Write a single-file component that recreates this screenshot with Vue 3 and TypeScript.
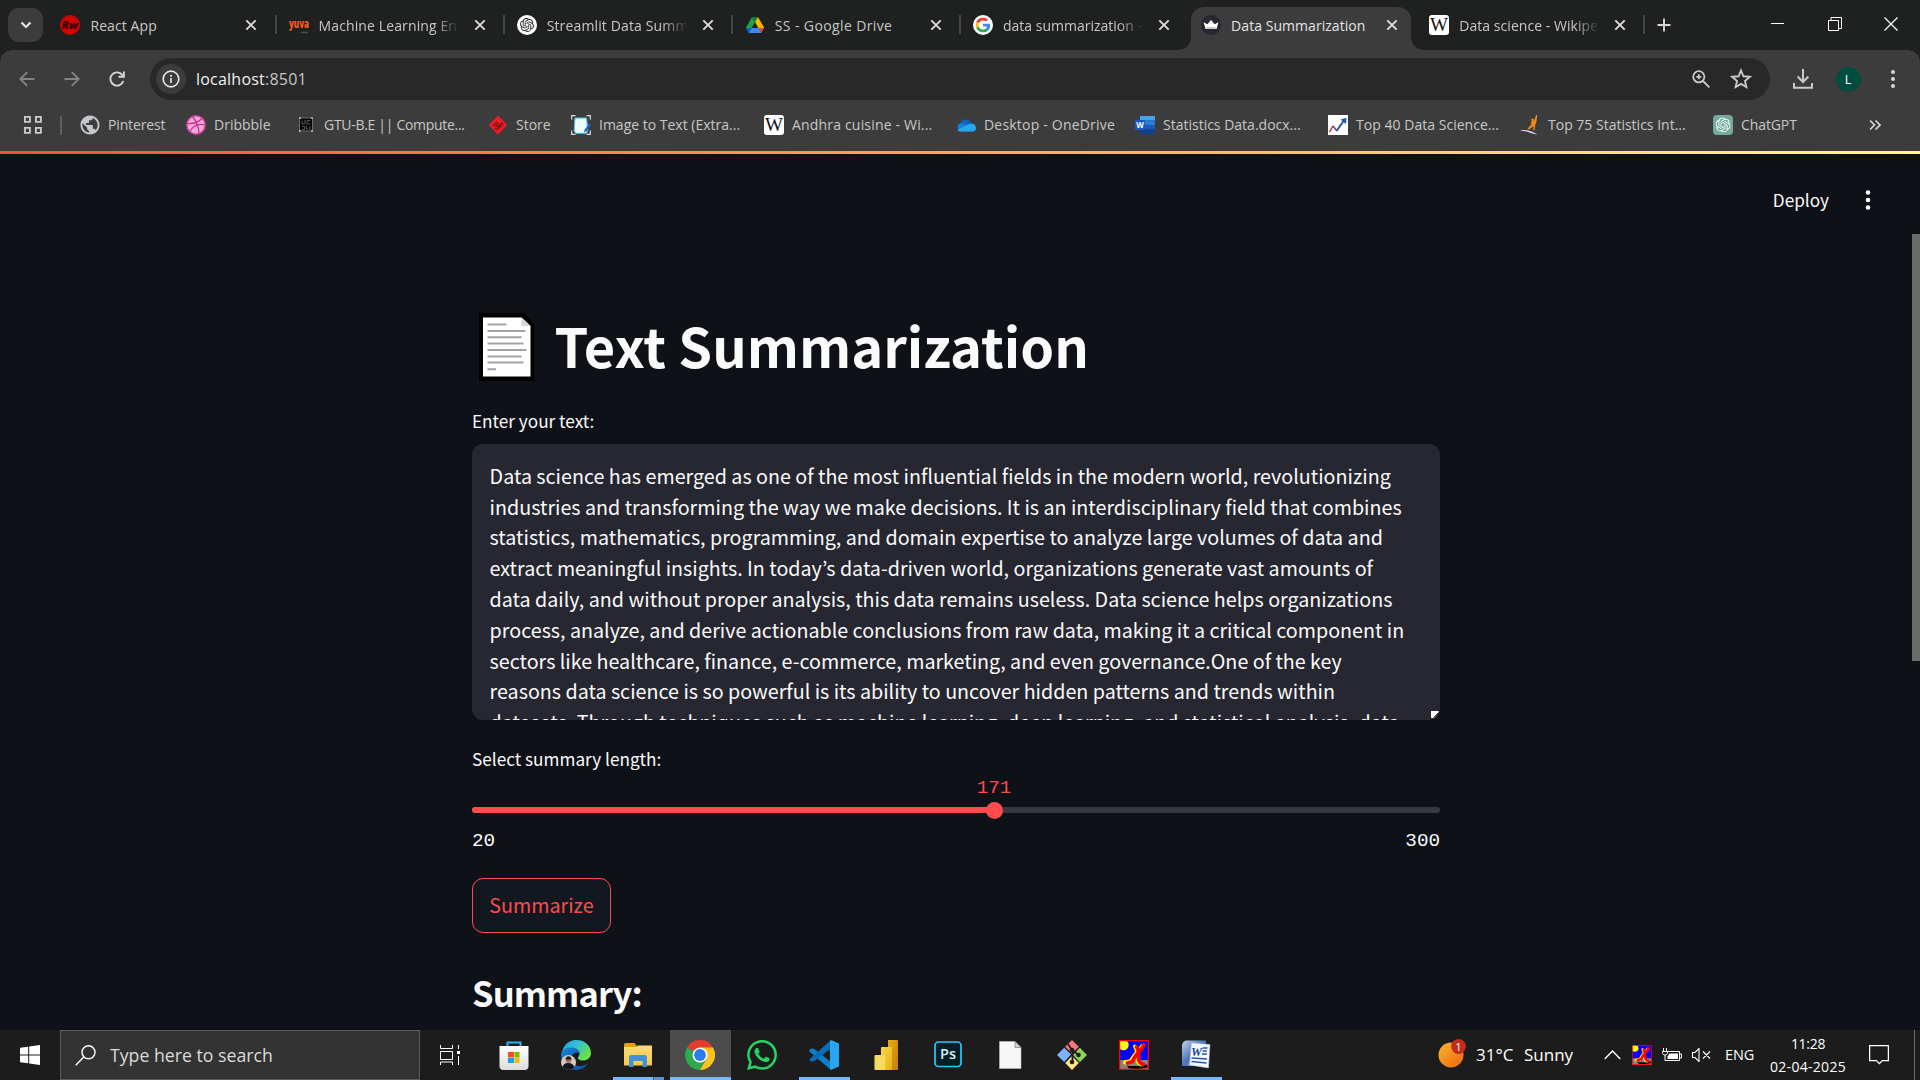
<script setup lang="ts">
interface Tab { icon: string; title: string; tracking: number; active?: boolean; sep?: boolean; fade?: boolean }
interface Bookmark { icon: string; title: string; width: number; tracking: number }
interface TaskApp { icon: string; open?: boolean; focused?: boolean; split?: boolean }
interface Letter { label: string; x: number; y: number; length: number }

const tabs: Tab[] = [
  { icon: 'rw', title: 'React App', tracking: 0.1, sep: true },
  { icon: 'yuva', title: 'Machine Learning En', tracking: 0.12, sep: true, fade: true },
  { icon: 'gpt-white', title: 'Streamlit Data Summ', tracking: 0.14, sep: true, fade: true },
  { icon: 'drive', title: 'SS - Google Drive', tracking: 0.38, sep: true },
  { icon: 'google', title: 'data summarization -', tracking: 0, fade: true },
  { icon: 'crown', title: 'Data Summarization', tracking: 0.05, active: true },
  { icon: 'wiki', title: 'Data science - Wikipe', tracking: 0.05, sep: true, fade: true },
]

const bookmarks: Bookmark[] = [
  { icon: 'globe', title: 'Pinterest', width: 106, tracking: -0.15 },
  { icon: 'dribbble', title: 'Dribbble', width: 110, tracking: 0 },
  { icon: 'gtu', title: 'GTU-B.E || Compute...', width: 192, tracking: -0.3 },
  { icon: 'store', title: 'Store', width: 83, tracking: 0 },
  { icon: 'image', title: 'Image to Text (Extra...', width: 193, tracking: 0 },
  { icon: 'wiki', title: 'Andhra cuisine - Wi...', width: 192, tracking: 0.18 },
  { icon: 'onedrive', title: 'Desktop - OneDrive', width: 179, tracking: 0.2 },
  { icon: 'word', title: 'Statistics Data.docx...', width: 193, tracking: 0 },
  { icon: 'chart', title: 'Top 40 Data Science...', width: 192, tracking: 0.03 },
  { icon: 'figure', title: 'Top 75 Statistics Int...', width: 193, tracking: 0 },
  { icon: 'gpt-green', title: 'ChatGPT', width: 100, tracking: -0.1 },
]

// Icons whose mark is a letter: the letters are set as text over the icon's base shape.
const letters: Record<string, Letter> = {
  rw: { label: 'Rw', x: 1.5, y: 14, length: 16.5 },
  yuva: { label: 'yuva', x: 0, y: 13, length: 20 },
  wiki: { label: 'W', x: 1, y: 15.8, length: 18 },
  word: { label: 'W', x: 1.2, y: 12.9, length: 7.6 },
  photoshop: { label: 'Ps', x: 7, y: 19, length: 16 },
  'word-2007': { label: 'W', x: 10, y: 15.5, length: 11 },
}

const lines: string[] = [
  'Data science has emerged as one of the most influential fields in the modern world, revolutionizing',
  'industries and transforming the way we make decisions. It is an interdisciplinary field that combines',
  'statistics, mathematics, programming, and domain expertise to analyze large volumes of data and',
  'extract meaningful insights. In today’s data-driven world, organizations generate vast amounts of',
  'data daily, and without proper analysis, this data remains useless. Data science helps organizations',
  'process, analyze, and derive actionable conclusions from raw data, making it a critical component in',
  'sectors like healthcare, finance, e-commerce, marketing, and even governance.One of the key',
  'reasons data science is so powerful is its ability to uncover hidden patterns and trends within',
  'datasets. Through techniques such as machine learning, deep learning, and statistical analysis, data',
]

const min = 20
const max = 300
const value = 171
const percent = ((value - min) / (max - min)) * 100

const apps: TaskApp[] = [
  { icon: 'ms-store' },
  { icon: 'edge' },
  { icon: 'explorer', open: true, split: true },
  { icon: 'chrome', open: true, focused: true },
  { icon: 'whatsapp' },
  { icon: 'vscode', open: true },
  { icon: 'powerbi' },
  { icon: 'photoshop' },
  { icon: 'file' },
  { icon: 'git' },
  { icon: 'xming' },
  { icon: 'word-2007', open: true },
]
</script>

<template>
  <div class="screen">
    <svg class="sprite" aria-hidden="true">
      <defs>
        <linearGradient id="g-edge" x1="0" y1="0" x2="1" y2="0.6"><stop offset="0" stop-color="#1b9de2" /><stop offset=".5" stop-color="#35c1d0" /><stop offset="1" stop-color="#6be33f" /></linearGradient>
        <linearGradient id="g-edge2" x1="0" y1="0" x2="1" y2="1"><stop offset="0" stop-color="#1583d8" /><stop offset="1" stop-color="#0f4f9e" /></linearGradient>
        <linearGradient id="g-folder" x1="0" y1="0" x2="0" y2="1"><stop offset="0" stop-color="#ffdb74" /><stop offset="1" stop-color="#fbc748" /></linearGradient>
        <linearGradient id="g-bag" x1="0" y1="0" x2="0" y2="1"><stop offset="0" stop-color="#fff" /><stop offset="1" stop-color="#dcdcdc" /></linearGradient>
        <linearGradient id="g-sun" x1="0" y1="0" x2="1" y2="1"><stop offset="0" stop-color="#f5b82e" /><stop offset="1" stop-color="#f2640f" /></linearGradient>
        <linearGradient id="g-pb" x1="0" y1="0" x2="1" y2="1"><stop offset="0" stop-color="#e8ad0f" /><stop offset="1" stop-color="#c87a0e" /></linearGradient>
        <linearGradient id="g-pb2" x1="0" y1="0" x2="1" y2="1"><stop offset="0" stop-color="#f8d84e" /><stop offset="1" stop-color="#e8b010" /></linearGradient>
        <linearGradient id="g-word" x1="0" y1="0" x2="1" y2="1"><stop offset="0" stop-color="#c5d5ee" /><stop offset=".5" stop-color="#4a72b8" /><stop offset="1" stop-color="#a9c0e4" /></linearGradient>
      </defs>
      <symbol id="knot" viewBox="0 0 24 24"><path d="M22.2819 9.8211a5.9847 5.9847 0 0 0-.5157-4.9108 6.0462 6.0462 0 0 0-6.5098-2.9A6.0651 6.0651 0 0 0 4.9807 4.1818a5.9847 5.9847 0 0 0-3.9977 2.9 6.0462 6.0462 0 0 0 .7427 7.0966 5.98 5.98 0 0 0 .511 4.9107 6.051 6.051 0 0 0 6.5146 2.9001A5.9847 5.9847 0 0 0 13.2599 24a6.0557 6.0557 0 0 0 5.7718-4.2058 5.9894 5.9894 0 0 0 3.9977-2.9001 6.0557 6.0557 0 0 0-.7475-7.0729zm-9.022 12.6081a4.4755 4.4755 0 0 1-2.8764-1.0408l.1419-.0804 4.7783-2.7582a.7948.7948 0 0 0 .3927-.6813v-6.7369l2.02 1.1686a.071.071 0 0 1 .038.052v5.5826a4.504 4.504 0 0 1-4.4945 4.4944zm-9.6607-4.1254a4.4708 4.4708 0 0 1-.5346-3.0137l.142.0852 4.783 2.7582a.7712.7712 0 0 0 .7806 0l5.8428-3.3685v2.3324a.0804.0804 0 0 1-.0332.0615L9.74 19.9502a4.4992 4.4992 0 0 1-6.1408-1.6464zM2.3408 7.8956a4.485 4.485 0 0 1 2.3655-1.9728V11.6a.7664.7664 0 0 0 .3879.6765l5.8144 3.3543-2.0201 1.1685a.0757.0757 0 0 1-.071 0l-4.8303-2.7865A4.504 4.504 0 0 1 2.3408 7.872zm16.5963 3.8558L13.1038 8.364 15.1192 7.2a.0757.0757 0 0 1 .071 0l4.8303 2.7913a4.4944 4.4944 0 0 1-.6765 8.1042v-5.6772a.79.79 0 0 0-.407-.667zm2.0107-3.0231l-.142-.0852-4.7735-2.7818a.7759.7759 0 0 0-.7854 0L9.409 9.2297V6.8974a.0662.0662 0 0 1 .0284-.0615l4.8303-2.7866a4.4992 4.4992 0 0 1 6.6802 4.66zM8.3065 12.863l-2.02-1.1638a.0804.0804 0 0 1-.038-.0567V6.0742a4.4992 4.4992 0 0 1 7.3757-3.4537l-.142.0805L8.704 5.459a.7948.7948 0 0 0-.3927.6813zm1.0976-2.3654l2.602-1.4998 2.6069 1.4998v2.9994l-2.5974 1.4997-2.6067-1.4997Z" /></symbol>

      <!-- favicons, 20 x 20 -->
      <symbol id="rw" viewBox="0 0 20 20"><circle cx="10" cy="10" r="10" fill="#cf0404" /></symbol>
      <symbol id="yuva" viewBox="0 0 20 20"><path d="M12 17.5h7" stroke="#4c4c4c" stroke-width="1.6" /></symbol>
      <symbol id="gpt-white" viewBox="0 0 20 20"><circle cx="10" cy="10" r="10" fill="#fff" /><use href="#knot" x="3" y="3" width="14" height="14" fill="#222" /></symbol>
      <symbol id="gpt-green" viewBox="0 0 20 20"><rect width="20" height="20" rx="4" fill="#74aa9c" /><use href="#knot" x="2.5" y="2.5" width="15" height="15" fill="#fff" /></symbol>
      <symbol id="drive" viewBox="-5 -5 97 88"><path d="m6.6 66.85 3.85 6.65c.8 1.4 1.95 2.5 3.3 3.3l13.75-23.8h-27.5c0 1.55.4 3.1 1.2 4.5z" fill="#0066da" /><path d="m43.65 25-13.75-23.8c-1.35.8-2.5 1.9-3.3 3.3l-25.4 44a9.06 9.06 0 0 0 -1.2 4.5h27.5z" fill="#1ea446" /><path d="m73.55 76.8c1.35-.8 2.5-1.9 3.3-3.3l1.6-2.75 7.65-13.25c.8-1.4 1.2-2.95 1.2-4.5h-27.5l5.85 11.5z" fill="#ea4335" /><path d="m43.65 25 13.75-23.8c-1.35-.8-2.9-1.2-4.5-1.2h-18.5c-1.6 0-3.15.45-4.5 1.2z" fill="#148037" /><path d="m59.8 53h-32.3l-13.75 23.8c1.35.8 2.9 1.2 4.5 1.2h50.8c1.6 0 3.15-.45 4.5-1.2z" fill="#3f86f8" /><path d="m73.4 26.5-12.7-22c-.8-1.4-1.95-2.5-3.3-3.3l-13.75 23.8 16.15 28h27.45c0-1.55-.4-3.1-1.2-4.5z" fill="#ffba00" /></symbol>
      <symbol id="google" viewBox="0 0 20 20"><circle cx="10" cy="10" r="10" fill="#fff" /><svg x="2.5" y="2.5" width="15" height="15" viewBox="0 0 48 48"><path fill="#EA4335" d="M24 9.5c3.54 0 6.71 1.22 9.21 3.6l6.85-6.85C35.9 2.38 30.47 0 24 0 14.62 0 6.51 5.38 2.56 13.22l7.98 6.19C12.43 13.72 17.74 9.5 24 9.5z" /><path fill="#4285F4" d="M46.98 24.55c0-1.57-.15-3.09-.38-4.55H24v9.02h12.94c-.58 2.96-2.26 5.48-4.78 7.18l7.73 6c4.51-4.18 7.09-10.36 7.09-17.65z" /><path fill="#FBBC05" d="M10.53 28.59c-.48-1.45-.76-2.99-.76-4.59s.27-3.14.76-4.59l-7.98-6.19C.92 16.46 0 20.12 0 24c0 3.88.92 7.54 2.56 10.78l7.97-6.19z" /><path fill="#34A853" d="M24 48c6.48 0 11.93-2.13 15.89-5.81l-7.73-6c-2.15 1.45-4.92 2.3-8.16 2.3-6.26 0-11.57-4.22-13.47-9.91l-7.98 6.19C6.51 42.62 14.62 48 24 48z" /></svg></symbol>
      <symbol id="crown" viewBox="0 0 20 20"><circle cx="10" cy="10" r="10" fill="#262730" /><path d="M2.6 7.2 6.4 9.3 10 5l3.6 4.3 3.8-2.1-1.9 6.9h-11z" fill="#fff" /><path d="M5 12h10l-.5 2.1h-9z" fill="#ccc" /></symbol>
      <symbol id="wiki" viewBox="0 0 20 20"><rect width="20" height="20" rx="3" fill="#fff" /></symbol>
      <symbol id="globe" viewBox="1.5 1.5 21 21"><circle cx="12" cy="12" r="9" fill="#3c3c3c" /><path fill="#c4c7cb" d="M12 2C6.48 2 2 6.48 2 12s4.48 10 10 10 10-4.48 10-10S17.52 2 12 2zm-1 17.93c-3.95-.49-7-3.85-7-7.93 0-.62.08-1.21.21-1.79L9 15v1c0 1.1.9 2 2 2v1.93zm6.9-2.54c-.26-.81-1-1.39-1.9-1.39h-1v-3c0-.55-.45-1-1-1H8v-2h2c.55 0 1-.45 1-1V7h2c1.1 0 2-.9 2-2v-.41c2.93 1.19 5 4.06 5 7.41 0 2.08-.8 3.97-2.1 5.39z" /></symbol>
      <symbol id="dribbble" viewBox="0 0 20 20"><circle cx="10" cy="10" r="9.2" fill="#f9a6d8" stroke="#c8439a" stroke-width="1.5" /><path d="M1.5 8.5c6 .4 11-1 14.2-5M6.500 1.800c4 4.500 6 10 6.700 16.500M4 16.500c3-6 8-8.500 15-6.500" fill="none" stroke="#b93a8d" stroke-width="1.3" /></symbol>
      <symbol id="gtu" viewBox="0 0 20 20"><rect x="3.500" y="3" width="13" height="13" fill="#050505" stroke="#6f6f6f" stroke-width="1" /><path d="M6 5.500v3.500h2.500M9 5v4M14 5.500h-3V9h3M6 11.500h2.500v3H6M10.500 11v3h2M14 11v4" stroke="#5a5a5a" fill="none" /><path d="M3 3h2M15 3h2M3 16h2M15 16h2" stroke="#eee" /></symbol>
      <symbol id="store" viewBox="0 0 20 20"><path d="M10 .5 19.200 10 10 19.500.8 10z" fill="#ed1c24" /><path d="m5 10.800 3.500-3.500 2 1.500-3 2.500 3 .5 3.500-4 1 3M7 13.500l2 1 4.500-3.500" stroke="#7a1218" fill="none" stroke-width="1.300" /></symbol>
      <symbol id="image" viewBox="0 0 20 20"><path d="M.7 4.500V.7H4.500M15.500.7h3.800V4.500M.7 15.500v3.800H4.500M15.500 19.300h3.800V15.500" fill="none" stroke="#ddd" stroke-width="1.200" /><path d="M4 3h11.500l1.300 12-1.300 3.300H4.500l-1.300-3z" fill="#e9fbff" stroke="#47c6e0" stroke-width="1" /><path d="m18.500 8-5 7-.5 2.500 2.500-1.300L20 10z" fill="#1a5fd0" /></symbol>
      <symbol id="onedrive" viewBox="0 0 20 20"><path d="M4.500 16.500a4.400 4.400 0 0 1-.4-8.200A6.200 6.200 0 0 1 15.300 8a4.300 4.300 0 0 1 .5 8.500z" fill="#0a64b8" /><path d="M3.500 8.700c3-.9 5 .3 7 1.800L3.500 15.500A4 4 0 0 1 3.500 8.700z" fill="#1480d8" /><path d="M4.500 16.500c-1.500 0-2.500-.6-3.200-1.400L12 9.400c5-1.800 8 1.100 8 3.600a3.500 3.500 0 0 1-3.500 3.500z" fill="#28a8ea" /></symbol>
      <symbol id="word" viewBox="0 0 20 20"><path d="M5 1h15v4.500H5z" fill="#41a5ee" /><path d="M5 5.500h15V10H5z" fill="#2b7cd3" /><path d="M5 10h15v4.500H5z" fill="#185abd" /><path d="M5 14.500h15V19H5z" fill="#103f91" /><rect y="5" width="10" height="10" rx="1" fill="#185abd" /></symbol>
      <symbol id="chart" viewBox="0 0 20 20"><path fill="#fff" d="M0 0h20v20H0z" /><path d="m1.500 17 3.500-6" stroke="#d43d45" stroke-width="1.500" /><path d="m5 11 4 5" stroke="#60408a" stroke-width="1.500" /><path d="m8.500 16 8.500-12" stroke="#2255a4" stroke-width="2" /><path d="m12.500 4.500 6-1.500-.5 6z" fill="#2255a4" /></symbol>
      <symbol id="figure" viewBox="0 0 20 20"><path d="M16 0h1c.3 4-.5 7-1.700 9.500l-.8 6-1.300-.5.300-4-4.500 3.500-1.500-.8 4-4.500-.5-2c.5-1.300 2.500-1.300 3.500-2.500z" fill="#f28a1e" /><circle cx="12.500" cy="4.800" r="1.300" fill="#f28a1e" /><path d="M0 15.500c6-1.500 12 .5 17.500 4-5 0-8-3-17.500-4z" fill="#d6d2f0" /></symbol>

      <!-- taskbar icons, 30 x 30 -->
      <symbol id="ms-store" viewBox="0 0 30 30"><path d="M8.500 8V2.500h13V8" fill="none" stroke="#2cb5f0" stroke-width="2" /><path d="M.5 6h29v20a4 4 0 0 1-4 4h-21a4 4 0 0 1-4-4z" fill="url(#g-bag)" /><path d="M9 12h6v5.500H9z" fill="#f25022" /><path d="M15.500 12h5v5.500h-5z" fill="#7fba00" /><path d="M9 18h6v5H9z" fill="#00a4ef" /><path d="M15.500 18h5v5h-5z" fill="#ffb900" /></symbol>
      <symbol id="edge" viewBox="0 0 30 30"><path d="M2 9C5 2.500 10 0 15.500 0 24 0 30 6 30 13c0 5-4 7.500-8 7.500-3.500 0-5.500-1.500-5-3 .3-1 1.500-2 1.500-4C18.500 10 14 8 10 8 6 8 3 10 .5 13z" fill="url(#g-edge)" /><path d="M.3 13C2 9 6 7.500 10 7.500c5 0 9 2.500 8.500 6.500-.8-1.500-3-2-5-1-4 2-3.500 8 0 11.500 3 2.500 8 2.500 13.500-1.500C24 28 20 30 15 30 6 30-.9 22 .3 13z" fill="url(#g-edge2)" /><circle cx="7.500" cy="22.500" r="7.500" fill="#d9c6c0" /><path d="M1.500 27c1.500-4 4-4 6-4s4.500.5 6 4a7.500 7.500 0 0 1-12 0z" fill="#17191f" /><circle cx="7.500" cy="20" r="2.800" fill="#9a6b58" /><path d="M4.500 19.500c0-4.500 6-4.500 6 0z" fill="#1a1a1a" /></symbol>
      <symbol id="explorer" viewBox="0 0 30 30"><path d="M1 4.500A1.500 1.500 0 0 1 2.500 3h9L14 6h13.500A1.500 1.500 0 0 1 29 7.500V10H1z" fill="#e0a00a" /><path d="M1 7h12l2-1.500h14v20H1z" fill="url(#g-folder)" /><path d="M6 27V17a2 2 0 0 1 2-2h14a2 2 0 0 1 2 2v10h-4.500v-6h-9v6z" fill="#3f93d9" /></symbol>
      <symbol id="chrome" viewBox="0 0 30 30"><path d="M15 15 2 7.500A15 15 0 0 1 28 7.500z" fill="#e33b2e" /><path d="M15 15 2 7.500A15 15 0 0 0 14.800 30L21.500 18.800z" fill="#2da94f" /><path d="M15 7.500h13A15 15 0 0 1 14.800 30l6.700-11.200z" fill="#fcc31e" /><circle cx="15" cy="15" r="7.500" fill="#fff" /><circle cx="15" cy="15" r="5.900" fill="#2a7af0" /></symbol>
      <symbol id="whatsapp" viewBox="0 0 24 24"><path fill="#25d366" d="M17.472 14.382c-.297-.149-1.758-.867-2.03-.967-.273-.099-.471-.148-.67.15-.197.297-.767.966-.94 1.164-.173.199-.347.223-.644.075-.297-.15-1.255-.463-2.39-1.475-.883-.788-1.48-1.761-1.653-2.059-.173-.297-.018-.458.13-.606.134-.133.298-.347.446-.52.149-.174.198-.298.298-.497.099-.198.05-.371-.025-.52-.075-.149-.669-1.612-.916-2.207-.242-.579-.487-.5-.669-.51-.173-.008-.371-.01-.57-.01-.198 0-.52.074-.792.372-.272.297-1.04 1.016-1.04 2.479 0 1.462 1.065 2.875 1.213 3.074.149.198 2.096 3.2 5.077 4.487.709.306 1.262.489 1.694.625.712.227 1.36.195 1.871.118.571-.085 1.758-.719 2.006-1.413.248-.694.248-1.289.173-1.413-.074-.124-.272-.198-.57-.347m-5.421 7.403h-.004a9.87 9.87 0 01-5.031-1.378l-.361-.214-3.741.982.998-3.648-.235-.374a9.86 9.86 0 01-1.51-5.26c.001-5.45 4.436-9.884 9.888-9.884 2.64 0 5.122 1.03 6.988 2.898a9.825 9.825 0 012.893 6.994c-.003 5.45-4.437 9.884-9.885 9.884m8.413-18.297A11.815 11.815 0 0012.05 0C5.495 0 .16 5.335.157 11.892c0 2.096.547 4.142 1.588 5.945L.057 24l6.305-1.654a11.882 11.882 0 005.683 1.448h.005c6.554 0 11.89-5.335 11.893-11.893a11.821 11.821 0 00-3.48-8.413Z" /></symbol>
      <symbol id="vscode" viewBox="0 0 30 30"><path d="M0 10.500 2 8.500l3 .2L22 22v8L.3 11.500z" fill="#0a80cb" /><path d="M.2 19.500 22 0v8.500L5 21.300l-3 .2z" fill="#0a6cb5" /><path d="M22 0 30 3.500v23L22 30l-1-1V1z" fill="#26a6ee" /></symbol>
      <symbol id="powerbi" viewBox="0 0 30 30"><path d="M17 0h9a1 1 0 0 1 1 1v28a1 1 0 0 1-1 1h-9z" fill="url(#g-pb)" /><path d="M10 8a1 1 0 0 1 1-1h9a1 1 0 0 1 1 1v22H10z" fill="url(#g-pb2)" /><path d="M3.500 16a1 1 0 0 1 1-1H13a1 1 0 0 1 1 1v14H4.500a1 1 0 0 1-1-1z" fill="#f6db62" /></symbol>
      <symbol id="photoshop" viewBox="0 0 30 30"><rect x="2" y="2" width="26" height="24.500" rx="3.500" fill="#061e26" stroke="#26c9ff" stroke-width="1.700" /></symbol>
      <symbol id="file" viewBox="0 0 30 30"><path d="M4.500 1.500H20L26 7.500V28.500H4.500z" fill="#f6f7f7" stroke="#bbb" stroke-width=".6" /><path d="M20 1.500V7.500h6z" fill="#d5d5d5" stroke="#777" stroke-width=".7" /></symbol>
      <symbol id="git" viewBox="0 0 30 30"><path d="m15 0 6.800 6.800L15 13.600 8.200 6.800z" fill="#f5777c" /><path d="m7.200 7.800 6.800 6.800-6.800 7.400L0 15z" fill="#80b3ff" /><path d="m22.800 7.800L30 15l-7.200 7.200L16 15z" fill="#8dd35f" /><path d="m15 16 6.800 7L15 30l-6.800-7z" fill="#ffe680" /><path d="m11 4 4.500 7v12M15.500 10l6 5" stroke="#241f1c" stroke-width="1.800" fill="none" /><circle cx="15" cy="10" r="2.300" fill="#241f1c" /><circle cx="15" cy="22" r="2.300" fill="#241f1c" /><circle cx="21.500" cy="15" r="2.300" fill="#241f1c" /></symbol>
      <symbol id="xming" viewBox="0 0 30 30"><path fill="#00f" d="M0 0h30v20H0z" /><path fill="#858585" d="M0 20h30v10H0z" /><circle cx="4.500" cy="5" r="5.200" fill="#ff0" /><path d="M8 26h14l6-1.500 1 3-10 1.500-9-.5z" fill="#000" /><path d="M23.500 6C20 11 15 14 12 21l-6 1.500M16 6.500c2 2 2 5 2 8.500 0 4 0 8 4.500 9.500" fill="none" stroke="#ff0" stroke-width="4" stroke-linecap="round" /><path d="M25 5C22 11 16 14 13.500 21.500l-5 1.500M17.500 7c2 2 2 5 2 8.500 0 4 0 7.500 5 9" fill="none" stroke="#f00" stroke-width="3.800" stroke-linecap="round" /><path fill="none" stroke="#f00" stroke-width="1.300" d="M.6.6h28.800v28.800H.6z" /></symbol>
      <symbol id="word-2007" viewBox="0 0 30 30"><path d="M6 .5h19V26H1V5.500A5 5 0 0 1 6 .5z" fill="url(#g-word)" /><path d="m10.500 3 18.500 1.500-1.500 23.500-19-3z" fill="#f3f7fd" stroke="#b3c3de" stroke-width=".5" /><path d="M21.500 8h5M21.500 11h4.500M21 14h5M10.500 18l15.500 1M10.500 21.500l15 1.500" stroke="#2c57a3" stroke-width="1.600" /></symbol>
    </svg>

    <header class="tabstrip">
      <button class="tab-search"><svg width="12" height="8" viewBox="0 0 12 8"><path d="m1.500 1.500 4.500 4.500 4.500-4.500" fill="none" stroke="#e3e3e3" stroke-width="2.200" /></svg></button>
      <div v-for="tab in tabs" :key="tab.title" class="tab" :class="{ active: tab.active, sep: tab.sep }">
        <svg class="favicon" viewBox="0 0 20 20">
          <use :href="'#' + tab.icon" width="20" height="20" />
          <text v-if="letters[tab.icon]" :class="'letter-' + tab.icon" :x="letters[tab.icon].x" :y="letters[tab.icon].y" :textLength="letters[tab.icon].length" lengthAdjust="spacingAndGlyphs">{{ letters[tab.icon].label }}</text>
        </svg>
        <span class="tab-title" :class="{ fade: tab.fade }" :style="{ letterSpacing: tab.tracking + 'px' }">{{ tab.title }}</span>
        <svg class="tab-close" viewBox="0 0 12 12"><path d="m1.300 1.300 9.400 9.400M10.700 1.300l-9.400 9.400" stroke="currentColor" stroke-width="1.900" /></svg>
      </div>
      <svg class="new-tab" viewBox="0 0 14 14"><path d="M7 .5v13M.5 7h13" stroke="#d5d5d5" stroke-width="1.900" /></svg>
      <div class="window-controls">
        <svg viewBox="0 0 14 14"><path d="M0 6.500h13" stroke="#fff" /></svg>
        <svg viewBox="0 0 14 14"><path d="M.5 3.500h10v10H.5zM3 3V.5h10.500v11H11" fill="none" stroke="#fff" /></svg>
        <svg viewBox="0 0 14 14"><path d="m.5.500 13 13M13.500.500l-13 13" stroke="#fff" stroke-width="1.200" /></svg>
      </div>
    </header>

    <div class="toolbar">
      <svg class="nav dim" viewBox="0 0 16 16"><path d="M15.500 8H1.500M8.200 1.200 1.400 8l6.800 6.800" /></svg>
      <svg class="nav dim" viewBox="0 0 16 16"><path d="M.5 8h14M7.800 1.200 14.600 8l-6.800 6.800" /></svg>
      <svg class="nav" viewBox="0 0 16 16"><path d="M14.300 10A6.600 6.600 0 1 1 12.800 3.400L14.600 5.300M14.900 .5v5.300H9.500" /></svg>
      <div class="address">
        <span class="info"><svg width="18" height="18" viewBox="0 0 18 18"><circle cx="9" cy="9" r="7.800" fill="none" stroke="#e3e3e3" stroke-width="1.700" /><path d="M9 8v5M9 4.800v1.900" stroke="#e3e3e3" stroke-width="1.700" /></svg></span>
        <span class="url"><b>localhost</b>:8501</span>
        <svg class="zoom-icon" viewBox="0 0 18 18"><circle cx="6.800" cy="6.800" r="5.600" /><path d="m11 11 6.300 6.300M6.800 4.300v5M4.300 6.800h5" /></svg>
        <svg class="star" viewBox="0 0 20 20"><path d="m10 2.200 2.200 5.300 5.800.5-4.400 3.800 1.300 5.600L10 14.400l-4.900 3 1.300-5.600L2 8l5.800-.5z" /></svg>
      </div>
      <svg class="download" viewBox="0 0 20 20"><path d="M10 0v12.500M4.600 7.500 10 13l5.400-5.500M1 14v4.800h18V14" /></svg>
      <span class="avatar">L</span>
      <svg class="menu" viewBox="0 0 6 20"><circle cx="3" cy="3" r="2" /><circle cx="3" cy="10" r="2" /><circle cx="3" cy="17" r="2" /></svg>
    </div>

    <nav class="bookmarks">
      <svg class="apps" viewBox="0 0 20 20"><path d="M1.900 1.900h5v5h-5zM12.900 1.900h5v5h-5zM1.900 12.900h5v5h-5zM12.900 12.900h5v5h-5z" /></svg>
      <span class="divider"></span>
      <a v-for="mark in bookmarks" :key="mark.title" class="bookmark" :style="{ width: mark.width + 'px' }">
        <svg class="favicon" viewBox="0 0 20 20">
          <use :href="'#' + mark.icon" width="20" height="20" />
          <text v-if="letters[mark.icon]" :class="'letter-' + mark.icon" :x="letters[mark.icon].x" :y="letters[mark.icon].y" :textLength="letters[mark.icon].length" lengthAdjust="spacingAndGlyphs">{{ letters[mark.icon].label }}</text>
        </svg>
        <span :style="{ letterSpacing: mark.tracking + 'px' }">{{ mark.title }}</span>
      </a>
      <svg class="more" viewBox="0 0 12 12"><path d="m1 1.500 4.500 4.500L1 10.500M6.500 1.500 11 6l-4.500 4.500" /></svg>
    </nav>

    <main class="page">
      <div class="decoration"></div>
      <div class="app-header">
        <span class="deploy">Deploy</span>
        <svg class="kebab" viewBox="0 0 6 20"><circle cx="3" cy="2.500" r="2.300" /><circle cx="3" cy="10" r="2.300" /><circle cx="3" cy="17.500" r="2.300" /></svg>
      </div>
      <div class="scroll">
        <div class="column">
          <h1>
            <svg class="page-icon" viewBox="0 0 56 68"><path d="M0 0h45.500L55.500 12v56H0z" fill="#000" /><path d="M4 4.500h38.500L51.500 13v50.500H4z" fill="#fff" /><path d="M42.500 4.500V13h9z" fill="#d8d8d8" /><path d="M8.500 11.500h19M8.500 18h38M8.500 24.300h34M8.500 30.600h36M8.500 37h39M8.500 43.400h34M8.500 49.600h36M8.500 56.200h8.500" stroke="#a3a3a3" stroke-width="2" /></svg>
            <span>Text Summarization</span>
          </h1>
          <label class="field-label">Enter your text:</label>
          <div class="textarea">
            <div v-for="line in lines" :key="line" class="line">{{ line }}</div>
            <svg class="grip" width="8" height="8" viewBox="0 0 8 8"><path d="M0 0h8L6.500 3 3 7H0z" fill="#fff" /><path d="m2.500 6.500 4.500-4.500M5 8l3-3" stroke="#34353d" stroke-width="1" /></svg>
          </div>
          <label class="field-label slider-label">Select summary length:</label>
          <div class="slider">
            <div class="track"><div class="filled" :style="{ width: percent + '%' }"></div></div>
            <div class="thumb" :style="{ left: percent + '%' }"><span class="thumb-value">{{ value }}</span></div>
          </div>
          <div class="range"><span>{{ min }}</span><span>{{ max }}</span></div>
          <button class="summarize">Summarize</button>
          <h3>Summary:</h3>
        </div>
        <div class="scrollbar"></div>
      </div>
    </main>

    <footer class="taskbar">
      <div class="start"><svg width="20" height="20" viewBox="0 0 20 20" fill="#fff"><path d="M0 2.800 8.200 1.700v7.800H0zM9.200 1.500 20 0v9.500H9.200zM0 10.500h8.200v7.800L0 17.200zM9.200 10.500H20V20L9.200 18.500z" /></svg></div>
      <div class="search">
        <svg width="21" height="21" viewBox="0 0 21 21"><circle cx="13.500" cy="7.300" r="6.500" /><path d="M8.800 11.900.700 20.300" /></svg>
        <span>Type here to search</span>
      </div>
      <div class="task-view"><svg width="20" height="20" viewBox="0 0 20 20"><path d="M.5 0v3.500h12V0M.5 6.500h12v8H.5zM.5 20v-3h12v3M18.500 0v4M18.500 11v9" fill="none" stroke="#fff" /><path d="M17 6h3v3h-3z" fill="#fff" /></svg></div>
      <div v-for="app in apps" :key="app.icon" class="task" :class="{ open: app.open, focused: app.focused, split: app.split }">
        <svg class="task-icon" viewBox="0 0 30 30">
          <use :href="'#' + app.icon" width="30" height="30" />
          <text v-if="letters[app.icon]" :class="'letter-' + app.icon" :x="letters[app.icon].x" :y="letters[app.icon].y" :textLength="letters[app.icon].length" lengthAdjust="spacingAndGlyphs">{{ letters[app.icon].label }}</text>
        </svg>
      </div>
      <div class="tray">
        <svg class="weather" viewBox="0 0 28 30"><circle cx="13" cy="16" r="12.500" fill="url(#g-sun)" /><circle cx="20.500" cy="7.500" r="7.400" fill="#c42b1c" /><text class="badge" x="20.500" y="11.500" text-anchor="middle">1</text></svg>
        <span class="temp">31°C</span><span class="sky">Sunny</span>
        <svg class="chevron" viewBox="0 0 17 10"><path d="m.7 9 7.800-8 7.800 8" /></svg>
        <svg class="tray-x" viewBox="0 0 30 30"><use href="#xming" width="30" height="30" /></svg>
        <svg class="battery" viewBox="0 0 20 14"><path d="M6 3.500h11.500v9H5M17.500 6h2v4h-2" fill="none" stroke="#fff" /><path d="M7.500 5.500h8.500v5.500H5.500V8.500z" fill="#fff" /><path d="M1.500 0v3M4.500 0v3M.5 3.500h5v2l-1.500 1.500h-2L.5 5.500zM3 7v5.500h2.500" fill="none" stroke="#fff" /></svg>
        <svg class="speaker" viewBox="0 0 19 14"><path d="M.5 4.500h2.500l4-4v13l-4-4H.5zM11 3.500l7 7M18 3.500l-7 7" /></svg>
        <span class="lang">ENG</span>
        <div class="clock"><span class="time">11:28</span><span class="date">02-04-2025</span></div>
        <svg class="notice" viewBox="0 0 20 20"><path d="M.6.6h18.800v15h-6l-3 3-3-3H.6z" /></svg>
        <span class="peek"></span>
      </div>
    </footer>
  </div>
</template>

<style>
html, body { margin: 0; overflow: hidden; background: #0e1117; }
</style>

<style scoped>
* { box-sizing: border-box; }
.screen { width: 1920px; height: 1080px; display: flex; flex-direction: column; overflow: hidden; background: #3c3c3c; font-family: "Open Sans", "Noto Sans", sans-serif; color: #e3e3e3; }
.sprite { position: absolute; width: 0; height: 0; }
button { font: inherit; padding: 0; }
svg { flex: none; display: block; }

.letter-rw { font: italic 800 11px "Open Sans", sans-serif; fill: #3b0505; }
.letter-yuva { font: 800 13px "Open Sans", sans-serif; fill: #f4591f; }
.letter-wiki { font: 18px "Liberation Serif", serif; fill: #111; }
.letter-word { font: 700 8px "Open Sans", sans-serif; fill: #fff; }
.letter-photoshop { font: 600 14px "Open Sans", sans-serif; fill: #d5f3ff; }
.letter-word-2007 { font: italic 700 12px "Liberation Serif", serif; fill: #25498f; }
.badge { font: 11px "Open Sans", sans-serif; fill: #fff; }

.tabstrip { height: 50px; flex: none; display: flex; background: #1f2120; }
.tab-search { width: 35px; height: 34px; margin: 8px 4.400px 0 8px; border: 0; border-radius: 11px; background: #3b3c3b; display: flex; align-items: center; justify-content: center; flex: none; }
.tab { width: 228.150px; height: 50px; display: flex; align-items: center; padding-left: 13px; position: relative; font-size: 14px; color: #c7c7c7; flex: none; }
.tab.sep::after { content: ""; position: absolute; right: -1px; top: 15px; width: 2px; height: 19px; background: #454746; }
.tab.active { color: #e3e3e3; z-index: 1; }
.tab.active::before { content: ""; position: absolute; left: -9px; right: -7px; top: 7px; bottom: 0; z-index: -1; background: radial-gradient(circle at 0 0, transparent 11.500px, #3c3c3c 12px) 0 100% / 12px 12px no-repeat, radial-gradient(circle at 100% 0, transparent 11.500px, #3c3c3c 12px) 100% 100% / 12px 12px no-repeat; }
.tab.active::after { content: ""; position: absolute; left: 3px; right: 5px; top: 7px; bottom: 0; z-index: -1; border-radius: 13px 13px 0 0; background: #3c3c3c; }
.favicon { width: 20px; height: 20px; }
.tab-title { width: 141px; margin-left: 10px; white-space: nowrap; line-height: 24px; padding-top: 1px; }
.tab-title.fade { -webkit-mask-image: linear-gradient(90deg, #000 115px, transparent 141px); mask-image: linear-gradient(90deg, #000 115px, transparent 141px); }
.tab-close { width: 12px; height: 12px; margin-left: 14px; color: #dcdcdc; }
.new-tab { width: 14px; height: 14px; margin: 18px 0 0 13px; }
.window-controls { display: flex; margin-left: 100px; gap: 42.500px; padding-top: 17px; }
.window-controls svg { width: 14px; height: 14px; }

.toolbar { height: 58px; flex: none; display: flex; align-items: center; background: #3c3c3c; position: relative; padding-left: 19px; }
.toolbar::before { content: ""; position: absolute; left: 0; top: 0; width: 12px; height: 12px; background: radial-gradient(circle at 100% 100%, transparent 11.500px, #1f2120 12px); }
.toolbar::after { content: ""; position: absolute; right: 0; top: 0; width: 12px; height: 12px; background: radial-gradient(circle at 0 100%, transparent 11.500px, #1f2120 12px); }
.nav { width: 16px; height: 16px; margin-right: 29px; fill: none; stroke: #d5d5d5; stroke-width: 1.900; }
.nav.dim { stroke: #838383; }
.nav:nth-of-type(3) { margin-right: 25px; }
.address { width: 1620px; height: 42px; border-radius: 21px; background: #282828; display: flex; align-items: center; padding-left: 6px; }
.info { width: 30px; height: 30px; border-radius: 50%; background: #3c3c3c; display: flex; align-items: center; justify-content: center; }
.url { margin-left: 10px; font-size: 16px; letter-spacing: .22px; color: #c7c7c7; line-height: 22px; }
.url b { font-weight: 400; color: #f1f1f1; }
.zoom-icon { width: 18px; height: 18px; margin-left: auto; fill: none; stroke: #c9c9c9; stroke-width: 1.800; }
.star { width: 22px; height: 22px; margin: 0 18.500px 0 20px; fill: none; stroke: #c9c9c9; stroke-width: 1.700; }
.download { width: 20px; height: 20px; margin-left: 22.500px; fill: none; stroke: #c9c9c9; stroke-width: 2; }
.avatar { width: 25px; height: 25px; border-radius: 50%; background: #004d40; color: #fff; font-size: 12.500px; line-height: 25px; text-align: center; margin-left: 23px; }
.menu { width: 6px; height: 20px; margin-left: 29px; fill: #d5d5d5; }

.bookmarks { height: 43px; flex: none; display: flex; align-items: center; padding: 0 0 9px 22.500px; font-size: 14px; color: #c7c7c7; background: #3c3c3c; }
.apps { width: 20px; height: 20px; fill: none; stroke: #c9c9c9; stroke-width: 1.900; }
.divider { width: 2px; height: 19px; background: #5d5e5e; margin: 0 18px 0 17.500px; }
.bookmark { display: flex; align-items: center; flex: none; white-space: nowrap; }
.bookmark span { margin-left: 8px; line-height: 20px; }
.more { width: 12px; height: 12px; margin-left: 56px; fill: none; stroke: #d5d5d5; stroke-width: 1.700; }

.page { height: 879px; flex: none; background: #0e1117; font-family: "Noto Sans CJK KR", sans-serif; color: #fafafa; display: flex; flex-direction: column; }
.decoration { height: 3px; flex: none; background: linear-gradient(90deg, #ff4b4b, #fffd80); }
.app-header { height: 80px; flex: none; display: flex; align-items: center; justify-content: flex-end; padding: 12px 49px 0 0; }
.deploy { font-size: 17.200px; line-height: 24px; }
.kebab { width: 6px; height: 20px; margin-left: 36px; fill: #fafafa; }
.scroll { height: 796px; display: flex; position: relative; padding-left: 472px; }
.scrollbar { position: absolute; right: 0; top: 0; width: 8px; height: 427px; background: #6b6b6b; }
.column { width: 968px; display: flex; flex-direction: column; align-items: flex-start; }
h1 { margin: 78px 0 0; padding-left: 7px; height: 70px; display: flex; align-items: flex-start; font-size: 54.200px; line-height: 66px; font-weight: 700; }
.page-icon { width: 56px; height: 68px; margin-top: 1px; }
h1 span { margin-left: 19.500px; white-space: nowrap; }
.field-label { font-size: 17.200px; line-height: 26px; margin-top: 26px; }
.textarea { margin-top: 10px; width: 968px; height: 276px; border-radius: 11px; background: #262730; padding: 16.900px 17.600px 0; overflow: hidden; font-size: 19.710px; position: relative; flex: none; }
.line { height: 30.800px; line-height: 30.800px; white-space: nowrap; }
.grip { position: absolute; right: 1px; bottom: 1px; }
.slider-label { margin-top: 26px; }
.slider { width: 968px; height: 6px; margin-top: 35px; position: relative; flex: none; }
.track { height: 6px; border-radius: 3px; background: #363840; overflow: hidden; }
.filled { height: 6px; background: #ff4b4b; }
.thumb { position: absolute; top: -5.500px; width: 17px; height: 17px; margin-left: -8.500px; border-radius: 50%; background: #ff4b4b; display: flex; justify-content: center; }
.thumb-value { position: absolute; bottom: 19px; color: #ff4b4b; font: 19.250px/24px "Liberation Mono", monospace; }
.range { width: 968px; display: flex; justify-content: space-between; font: 19.250px/24px "Liberation Mono", monospace; margin-top: 16px; }
.summarize { margin-top: 25px; width: 139px; height: 55px; border: 1px solid #ff4b4b; border-radius: 11px; background: #131720; color: #ff4b4b; font-size: 19.700px; line-height: 30px; flex: none; padding-bottom: 2px; }
h3 { margin: 34px 0 0; font-size: 34.500px; line-height: 50px; font-weight: 700; letter-spacing: -.9px; }

.taskbar { height: 50px; flex: none; display: flex; background: #1c1c1c; color: #fff; }
.start { width: 60px; display: flex; align-items: center; justify-content: center; }
.search { width: 360px; border: 1px solid #5c5c5c; background: #333; display: flex; align-items: center; padding-left: 14px; font-size: 17.700px; color: #dadada; }
.search svg { fill: none; stroke: #fff; stroke-width: 1.400; }
.search span { margin-left: 14px; line-height: 24px; }
.task-view { width: 63px; display: flex; align-items: center; padding-left: 20px; }
.task { width: 62px; display: flex; align-items: center; position: relative; padding-left: 15.500px; }
.task-icon { width: 30px; height: 30px; }
.task.open::after { content: ""; position: absolute; left: 6px; bottom: 0; width: 51px; height: 3px; background: #76b9ff; }
.task.split::after { background: linear-gradient(90deg, #76b9ff 40px, #3f648c 40px, #3f648c 41px, #5d93cd 41px); }
.task.focused { background: linear-gradient(90deg, transparent 1px, #4c4c4c 1px); }
.task.focused::after { left: 1px; width: 61px; }
.tray { flex: 1; display: flex; align-items: center; padding-left: 211px; white-space: nowrap; }
.weather { width: 28px; height: 30px; margin-top: -2px; }
.temp { margin-left: 10px; font-size: 17px; width: 48px; line-height: 24px; }
.sky { font-size: 17px; width: 51px; line-height: 24px; }
.chevron { width: 17px; height: 10px; margin-left: 29px; fill: none; stroke: #fff; stroke-width: 1.400; }
.tray-x { width: 20px; height: 20px; margin-left: 11px; }
.battery { width: 20px; height: 14px; margin-left: 10px; }
.speaker { width: 19px; height: 14px; margin-left: 10px; fill: none; stroke: #fff; stroke-width: 1.100; }
.lang { margin-left: 14px; font-size: 14.500px; width: 30px; line-height: 20px; letter-spacing: -.1px; }
.clock { width: 80px; margin-left: 13px; display: flex; flex-direction: column; align-items: center; font-size: 14px; line-height: 23.500px; }
.time { letter-spacing: -.3px; }
.date { letter-spacing: .3px; }
.notice { width: 20px; height: 20px; margin-left: 21px; fill: none; stroke: #fff; stroke-width: 1.300; }
.peek { width: 1px; height: 50px; margin-left: auto; margin-right: 5px; background: #6d6d6d; }
</style>
